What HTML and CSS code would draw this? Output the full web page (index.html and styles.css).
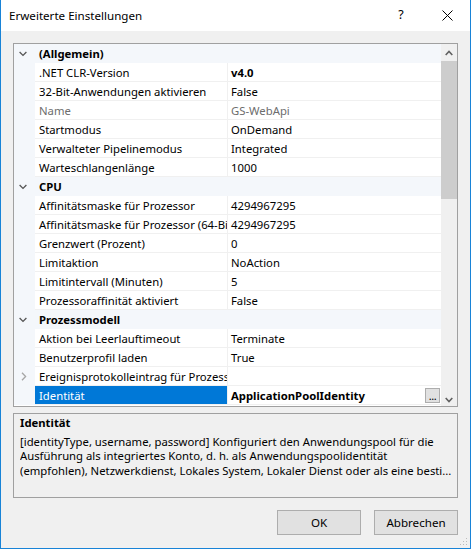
FILE: index.html
```html
<!DOCTYPE html>
<html lang="de">
<head>
<meta charset="utf-8">
<title>Erweiterte Einstellungen</title>
<link rel="stylesheet" href="styles.css">
</head>
<body>
<div class="window">
  <div class="titlebar">
    <span class="title">Erweiterte Einstellungen</span>
    <span class="tb-btn help">?</span>
    <span class="tb-btn close"><svg width="11" height="11" viewBox="0 0 11 11"><path d="M0.5 0.5L10.5 10.5M10.5 0.5L0.5 10.5" stroke="#000" stroke-width="1" fill="none"/></svg></span>
  </div>
  <div class="content">
    <div class="grid">
      <div class="rows">
        <div class="cat"><span class="gut"><svg class="chev-down" width="8" height="6" viewBox="0 0 8 6"><path d="M0.6 1L4 4.4L7.4 1" stroke="#555" stroke-width="1.3" fill="none"/></svg></span><span class="cat-label">(Allgemein)</span></div>
        <div class="prop"><span class="gut"></span><span class="name">.NET CLR-Version</span><span class="val bold">v4.0</span></div>
        <div class="prop"><span class="gut"></span><span class="name">32-Bit-Anwendungen aktivieren</span><span class="val">False</span></div>
        <div class="prop disabled"><span class="gut"></span><span class="name">Name</span><span class="val">GS-WebApi</span></div>
        <div class="prop"><span class="gut"></span><span class="name">Startmodus</span><span class="val">OnDemand</span></div>
        <div class="prop"><span class="gut"></span><span class="name">Verwalteter Pipelinemodus</span><span class="val">Integrated</span></div>
        <div class="prop"><span class="gut"></span><span class="name">Warteschlangenlänge</span><span class="val">1000</span></div>
        <div class="cat"><span class="gut"><svg class="chev-down" width="8" height="6" viewBox="0 0 8 6"><path d="M0.6 1L4 4.4L7.4 1" stroke="#555" stroke-width="1.3" fill="none"/></svg></span><span class="cat-label">CPU</span></div>
        <div class="prop"><span class="gut"></span><span class="name">Affinitätsmaske für Prozessor</span><span class="val">4294967295</span></div>
        <div class="prop"><span class="gut"></span><span class="name">Affinitätsmaske für Prozessor (64-Bi</span><span class="val">4294967295</span></div>
        <div class="prop"><span class="gut"></span><span class="name">Grenzwert (Prozent)</span><span class="val">0</span></div>
        <div class="prop"><span class="gut"></span><span class="name">Limitaktion</span><span class="val">NoAction</span></div>
        <div class="prop"><span class="gut"></span><span class="name">Limitintervall (Minuten)</span><span class="val">5</span></div>
        <div class="prop"><span class="gut"></span><span class="name">Prozessoraffinität aktiviert</span><span class="val">False</span></div>
        <div class="cat"><span class="gut"><svg class="chev-down" width="8" height="6" viewBox="0 0 8 6"><path d="M0.6 1L4 4.4L7.4 1" stroke="#555" stroke-width="1.3" fill="none"/></svg></span><span class="cat-label">Prozessmodell</span></div>
        <div class="prop"><span class="gut"></span><span class="name">Aktion bei Leerlauftimeout</span><span class="val">Terminate</span></div>
        <div class="prop"><span class="gut"></span><span class="name">Benutzerprofil laden</span><span class="val">True</span></div>
        <div class="prop"><span class="gut"><svg class="chev-right" width="6" height="9" viewBox="0 0 6 9"><path d="M1 0.8L4.6 4.5L1 8.2" stroke="#a6a6a6" stroke-width="1.3" fill="none"/></svg></span><span class="name">Ereignisprotokolleintrag für Prozess</span><span class="val"></span></div>
        <div class="prop selected"><span class="gut"></span><span class="name">Identität</span><span class="val bold"><span class="val-text">ApplicationPoolIdentity</span><span class="ellipsis-btn">...</span></span></div>
      </div>
      <div class="scrollbar">
        <div class="sb-btn"><svg width="8" height="6" viewBox="0 0 8 6"><path d="M0.7 5L4 1.5L7.3 5" stroke="#606060" stroke-width="1.6" fill="none"/></svg></div>
        <div class="sb-track"><div class="sb-thumb"></div></div>
        <div class="sb-btn sb-down"><svg width="8" height="6" viewBox="0 0 8 6"><path d="M0.7 1L4 4.5L7.3 1" stroke="#606060" stroke-width="1.6" fill="none"/></svg></div>
      </div>
    </div>
    <div class="desc">
      <div class="desc-title">Identität</div>
      <div class="desc-line">[identityType, username, password] Konfiguriert den Anwendungspool für die</div>
      <div class="desc-line">Ausführung als integriertes Konto, d. h. als Anwendungspoolidentität</div>
      <div class="desc-line">(empfohlen), Netzwerkdienst, Lokales System, Lokaler Dienst oder als eine besti...</div>
    </div>
    <div class="buttons">
      <button class="btn">OK</button>
      <button class="btn">Abbrechen</button>
    </div>
  </div>
  <svg class="grip" width="8" height="8" viewBox="0 0 8 8">
    <rect x="6" y="0" width="1" height="1" fill="#bcbcbc"/>
    <rect x="3" y="3" width="1" height="1" fill="#bcbcbc"/>
    <rect x="6" y="3" width="1" height="1" fill="#bcbcbc"/>
    <rect x="0" y="6" width="1" height="1" fill="#bcbcbc"/>
    <rect x="3" y="6" width="1" height="1" fill="#bcbcbc"/>
    <rect x="6" y="6" width="1" height="1" fill="#bcbcbc"/>
  </svg>
</div>
</body>
</html>
```
FILE: styles.css
```css
* { box-sizing: border-box; }
html, body { margin: 0; padding: 0; }
body {
  background: #f0f0f0;
  font-family: "Noto Sans", "Open Sans", sans-serif;
  font-size: 11.3px;
  color: #000;
}
.window {
  position: relative;
  width: 471px;
  height: 549px;
  background: #f0f0f0;
  border-left: 1px solid #1883d7;
  border-right: 1px solid #1883d7;
  border-bottom: 1px solid #1883d7;
  overflow: hidden;
}
.titlebar {
  height: 31px;
  background: #fff;
  display: flex;
  align-items: center;
}
.title {
  flex: 1;
  padding-left: 8px;
  font-size: 11.6px;
  padding-bottom: 1px;
}
.tb-btn {
  width: 46px;
  height: 31px;
  display: flex;
  align-items: center;
  justify-content: center;
}
.help { font-size: 12.5px; padding-bottom: 2px; }
.close svg { display: block; margin-bottom: 1px; }
.content {
  padding: 12px 12px 0 12px;
}
.grid {
  height: 364px;
  border: 1px solid #a0a0a0;
  display: flex;
  background: #fff;
}
.rows {
  width: 427px;
  height: 362px;
  overflow: hidden;
}
.cat, .prop {
  display: flex;
  height: 19px;
  line-height: 18px;
}
.cat {
  background: #f4f7fb;
  padding-top: 1px;
}
.gut {
  width: 21px;
  flex: none;
  background: #f4f7fb;
  display: flex;
  align-items: center;
}
.chev-down { margin-left: 5px; display: block; }
.chev-right { margin-left: 7px; display: block; }
.cat-label {
  padding-left: 4px;
  font-weight: bold;
}
.name {
  width: 193px;
  flex: none;
  padding-left: 4px;
  padding-top: 1px;
  line-height: 17px;
  border-right: 1px solid #f0f0f0;
  border-bottom: 1px solid #f0f0f0;
  white-space: nowrap;
  overflow: hidden;
}
.val {
  width: 213px;
  flex: none;
  padding-left: 3px;
  padding-top: 1px;
  line-height: 17px;
  border-bottom: 1px solid #f0f0f0;
  white-space: nowrap;
  overflow: hidden;
  display: flex;
  align-items: center;
}
.bold { font-weight: bold; }
.disabled .name, .disabled .val { color: #6d6d6d; }
.selected .name {
  background: #0078d7;
  color: #fff;
}
.val-text { flex: 1; }
.ellipsis-btn {
  width: 15px;
  height: 15px;
  margin-right: 1px;
  border: 1px solid #adadad;
  background: #e1e1e1;
  font-weight: normal;
  font-size: 11px;
  line-height: 14px;
  text-align: center;
  letter-spacing: -0.5px;
  flex: none;
}
.scrollbar {
  width: 16px;
  height: 362px;
  background: #f0f0f0;
  display: flex;
  flex-direction: column;
}
.sb-btn {
  height: 17px;
  display: flex;
  align-items: center;
  justify-content: center;
  flex: none;
}
.sb-btn svg { display: block; }
.sb-down { align-items: flex-end; padding-bottom: 3px; }
.sb-track {
  flex: 1;
}
.sb-thumb {
  height: 138px;
  background: #cdcdcd;
}
.desc {
  margin-top: 6px;
  height: 85px;
  border: 1px solid #a0a0a0;
  padding: 2px 6px 0 6px;
  line-height: 14.6px;
}
.desc-title {
  font-weight: bold;
  margin-bottom: 4px;
}
.desc-line {
  white-space: nowrap;
  overflow: hidden;
}
.buttons {
  margin-top: 12px;
  display: flex;
  justify-content: flex-end;
  gap: 13px;
}
.btn {
  width: 84px;
  height: 25px;
  border: 1px solid #adadad;
  background: #e1e1e1;
  font-family: "Noto Sans", "Open Sans", sans-serif;
  font-size: 11.6px;
  color: #000;
  padding: 0;
}
.grip {
  position: absolute;
  right: 2px;
  bottom: 2px;
  display: block;
}
```
